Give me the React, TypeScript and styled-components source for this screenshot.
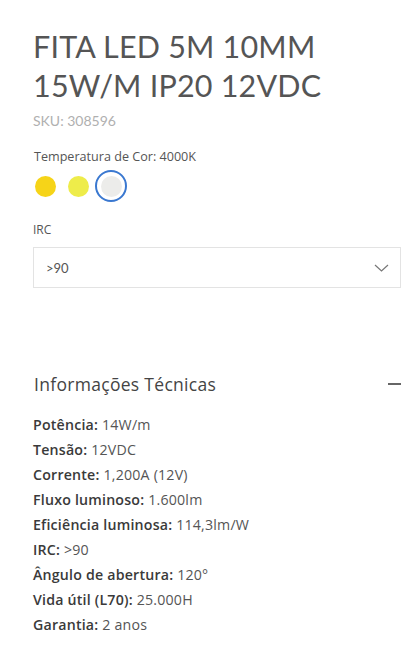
import React from "react";
import styled, { createGlobalStyle } from "styled-components";

const Global = createGlobalStyle`
  html, body { margin: 0; padding: 0; background: #fff; }
  body { font-family: Lato, "Open Sans", sans-serif; color: #444; }
  * { box-sizing: border-box; }
`;

const Page = styled.div`
  padding: 27px 18px 20px 33px;
  display: flex;
  flex-direction: column;
`;

const Title = styled.h1`
  margin: 0;
  font-family: Lato, sans-serif;
  font-weight: 400;
  font-size: 30.5px;
  line-height: 39px;
  color: #555;
  letter-spacing: 0.2px;
`;

const Sku = styled.div`
  margin-top: 7px;
  font-size: 14px;
  color: #b0b0b0;
`;

const OptionLabel = styled.div`
  font-family: "Open Sans", sans-serif;
  font-size: 12px;
  color: #555;
`;

const TempLabel = styled(OptionLabel)`
  margin-top: 19px;
  margin-left: 1px;
  font-size: 12.6px;
`;

const Swatches = styled.div`
  display: flex;
  align-items: center;
  gap: 1px;
  margin-top: 5px;
  margin-left: -4px;
`;

const Swatch = styled.div<{ $color: string; $selected?: boolean }>`
  width: 32px;
  height: 32px;
  border-radius: 50%;
  display: flex;
  align-items: center;
  justify-content: center;
  border: 2.5px solid ${(p) => (p.$selected ? "#3a78d0" : "transparent")};
  &::after {
    content: "";
    width: 21px;
    height: 21px;
    border-radius: 50%;
    background: ${(p) => p.$color};
  }
`;

const IrcLabel = styled(OptionLabel)`
  margin-top: 19px;
`;

const Select = styled.div`
  margin-top: 9px;
  height: 41px;
  border: 1px solid #e3e3e3;
  display: flex;
  align-items: center;
  justify-content: space-between;
  padding: 0 11px 0 12px;
  font-size: 13px;
  color: #555;
`;

const Section = styled.div`
  margin-top: 85px;
  display: flex;
  align-items: center;
  justify-content: space-between;
`;

const SectionTitle = styled.h2`
  margin: 0;
  font-family: "Open Sans", sans-serif;
  font-size: 17.5px;
  letter-spacing: 0.3px;
  font-weight: 400;
  color: #444;
  line-height: 22px;
  padding-left: 1px;
`;

const Minus = styled.div`
  width: 13px;
  height: 1.5px;
  background: #666;
`;

const Specs = styled.ul`
  list-style: none;
  margin: 17px 0 0;
  padding: 0;
`;

const Spec = styled.li`
  font-family: "Open Sans", sans-serif;
  font-size: 14.2px;
  letter-spacing: 0.2px;
  line-height: 25px;
  color: #555;
  b {
    font-weight: 600;
    color: #3a3a3a;
  }
`;

const specs: [string, string][] = [
  ["Potência:", "14W/m"],
  ["Tensão:", "12VDC"],
  ["Corrente:", "1,200A (12V)"],
  ["Fluxo luminoso:", "1.600lm"],
  ["Eficiência luminosa:", "114,3lm/W"],
  ["IRC:", ">90"],
  ["Ângulo de abertura:", "120°"],
  ["Vida útil (L70):", "25.000H"],
  ["Garantia:", "2 anos"],
];

export default function App() {
  return (
    <>
      <Global />
      <Page>
        <Title>
          FITA LED 5M 10MM
          <br />
          15W/M IP20 12VDC
        </Title>
        <Sku>SKU: 308596</Sku>
        <TempLabel>Temperatura de Cor: 4000K</TempLabel>
        <Swatches>
          <Swatch $color="#f6d418" />
          <Swatch $color="#eeec4a" />
          <Swatch $color="#ececea" $selected />
        </Swatches>
        <IrcLabel>IRC</IrcLabel>
        <Select>
          <span>&gt;90</span>
          <svg width="15" height="8" viewBox="0 0 15 8" fill="none">
            <path d="M1 1l6.5 6L14 1" stroke="#777" strokeWidth="1.2" />
          </svg>
        </Select>
        <Section>
          <SectionTitle>Informações Técnicas</SectionTitle>
          <Minus />
        </Section>
        <Specs>
          {specs.map(([k, v]) => (
            <Spec key={k}>
              <b>{k}</b> {v}
            </Spec>
          ))}
        </Specs>
      </Page>
    </>
  );
}
